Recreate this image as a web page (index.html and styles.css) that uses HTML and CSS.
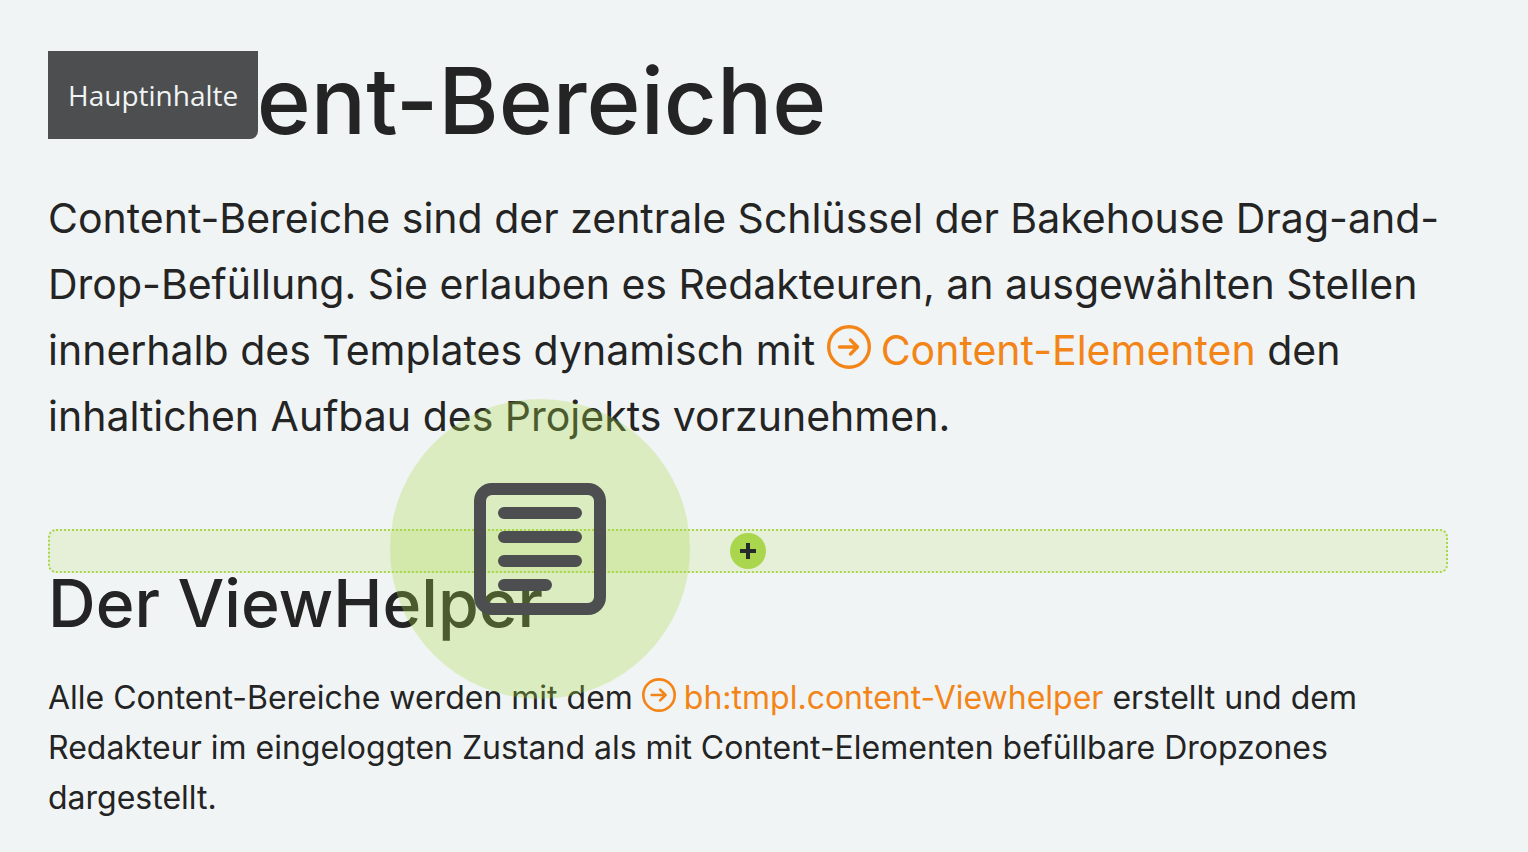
FILE: index.html
```html
<!DOCTYPE html>
<html lang="de">
<head>
    <meta charset="UTF-8">
    <meta name="viewport" content="width=device-width, initial-scale=1.0">
    <title>Content-Bereiche</title>
    <link rel="stylesheet" href="styles.css">
</head>
<body>
    <main class="content">
        <header class="page-header">
            <span class="area-label">Hauptinhalte</span>
            <h1>Content-Bereiche</h1>
        </header>
        <p class="lead">
            Content-Bereiche sind der zentrale Schlüssel der Bakehouse Drag-and-<br>
            Drop-Befüllung. Sie erlauben es Redakteuren, an ausgewählten Stellen<br>
            innerhalb des Templates dynamisch mit
            <a href="#content-elemente"><svg class="link-icon" viewBox="0 0 44 44" aria-hidden="true"><circle cx="22" cy="22" r="20.3"/><path d="M12.5 22h18M23.5 15l7 7-7 7"/></svg>Content-Elementen</a> den<br>
            inhaltichen Aufbau des Projekts vorzunehmen.
        </p>
        <div class="dropzone">
            <button class="add-button" type="button" aria-label="Element hinzufügen">
                <svg viewBox="0 0 16 16" aria-hidden="true"><path d="M8 0v16M0 8h16"/></svg>
            </button>
            <div class="drag-preview">
                <svg viewBox="0 0 132 132" aria-hidden="true">
                    <rect x="6" y="6" width="120" height="120" rx="12"/>
                    <path d="M30 30h72M30 54h72M30 78h72M30 102h42"/>
                </svg>
            </div>
        </div>
        <section class="text">
            <h2>Der ViewHelper</h2>
            <p>
                Alle Content-Bereiche werden mit dem
                <a href="#viewhelper"><svg class="link-icon" viewBox="0 0 44 44" aria-hidden="true"><circle cx="22" cy="22" r="20.3"/><path d="M12.5 22h18M23.5 15l7 7-7 7"/></svg>bh:tmpl.content-Viewhelper</a> erstellt und dem<br>
                Redakteur im eingeloggten Zustand als mit Content-Elementen befüllbare Dropzones<br>
                dargestellt.
            </p>
        </section>
    </main>
</body>
</html>
```
FILE: styles.css
```css
* {
    box-sizing: border-box;
}
body {
    margin: 0;
    background-color: #f0f4f5;
    color: #242424;
    font-family: Inter, "Liberation Sans", sans-serif;
}
.content {
    padding: 51px 80px 24px 48px;
}
h1, h2, p {
    margin: 0;
}
.page-header {
    position: relative;
}
h1 {
    font-size: 92px;
    line-height: 100px;
    font-weight: 500;
}
.area-label {
    position: absolute;
    top: 0;
    left: 0;
    padding: 24px 20px;
    background-color: #4d4e50;
    border-bottom-right-radius: 8px;
    color: #f0f4f5;
    font-family: "Open Sans", "Noto Sans", sans-serif;
    font-size: 28px;
    line-height: 40px;
}
.lead {
    margin-top: 34px;
    font-size: 41px;
    line-height: 66px;
    white-space: nowrap;
}
a {
    color: #f38518;
    text-decoration: none;
}
.link-icon {
    width: 44px;
    height: 44px;
    margin-right: 10px;
    vertical-align: -4px;
    fill: none;
    stroke: currentColor;
    stroke-width: 3.4;
    stroke-linecap: round;
    stroke-linejoin: round;
}
.dropzone {
    position: relative;
    display: flex;
    justify-content: center;
    align-items: center;
    height: 44px;
    margin-top: 80px;
    border: 2px dotted #a9d64d;
    border-radius: 8px;
    background-color: #e6f0d9;
}
.add-button {
    display: flex;
    justify-content: center;
    align-items: center;
    width: 36px;
    height: 36px;
    padding: 0;
    border: none;
    border-radius: 50%;
    background-color: #a9d64d;
    cursor: pointer;
}
.add-button svg {
    width: 16px;
    height: 16px;
    stroke: #242a2c;
    stroke-width: 4;
}
.drag-preview {
    position: absolute;
    top: -132px;
    left: 340px;
    z-index: 1;
    display: flex;
    justify-content: center;
    align-items: center;
    width: 300px;
    height: 300px;
    border-radius: 50%;
    background-color: rgba(169, 218, 70, 0.3);
}
.drag-preview svg {
    width: 132px;
    height: 132px;
    fill: none;
    stroke: #4d4e50;
    stroke-width: 12;
    stroke-linecap: round;
}
.text h2 {
    font-size: 66px;
    line-height: 60px;
    font-weight: 500;
}
.text p {
    margin-top: 40px;
    font-size: 32px;
    line-height: 50px;
    white-space: nowrap;
}
.text .link-icon {
    width: 34px;
    height: 34px;
    margin-right: 8px;
    vertical-align: -3px;
}
```
